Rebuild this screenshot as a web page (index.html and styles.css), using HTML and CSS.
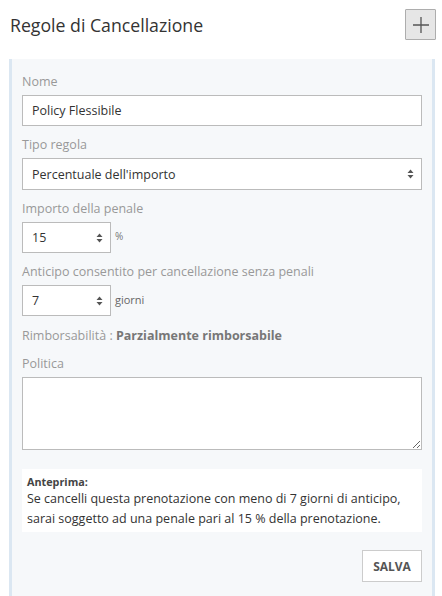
FILE: index.html
```html
<!DOCTYPE html>
<html lang="it">
<head>
<meta charset="utf-8">
<title>Regole di Cancellazione</title>
<link rel="stylesheet" href="styles.css">
</head>
<body>
<div class="page">
  <header class="header">
    <h1 class="title">Regole di Cancellazione</h1>
    <button class="add-btn" type="button" aria-label="Aggiungi">
      <svg width="18" height="18" viewBox="0 0 18 18"><path d="M9 1v16M1 9h16" stroke="#555" stroke-width="1.3" fill="none"/></svg>
    </button>
  </header>
  <section class="panel">
    <div class="group">
      <label class="label">Nome</label>
      <input class="input" type="text" value="Policy Flessibile">
    </div>
    <div class="group">
      <label class="label">Tipo regola</label>
      <div class="field select">
        <span class="field-text">Percentuale dell'importo</span>
        <svg class="arrows" width="7" height="10" viewBox="0 0 7 10"><path d="M3.5 0.5L6.5 4H0.5z M3.5 9.5L6.5 6H0.5z" fill="#555"/></svg>
      </div>
    </div>
    <div class="group">
      <label class="label">Importo della penale</label>
      <div class="inline">
        <div class="field number">
          <span class="field-text">15</span>
          <svg class="arrows" width="7" height="10" viewBox="0 0 7 10"><path d="M3.5 0.5L6.5 4H0.5z M3.5 9.5L6.5 6H0.5z" fill="#555"/></svg>
        </div>
        <span class="unit unit-pct">%</span>
      </div>
    </div>
    <div class="group">
      <label class="label">Anticipo consentito per cancellazione senza penali</label>
      <div class="inline">
        <div class="field number">
          <span class="field-text">7</span>
          <svg class="arrows" width="7" height="10" viewBox="0 0 7 10"><path d="M3.5 0.5L6.5 4H0.5z M3.5 9.5L6.5 6H0.5z" fill="#555"/></svg>
        </div>
        <span class="unit">giorni</span>
      </div>
    </div>
    <div class="group">
      <p class="label refund">Rimborsabilità : <strong>Parzialmente rimborsabile</strong></p>
    </div>
    <div class="group">
      <label class="label">Politica</label>
      <textarea class="textarea"></textarea>
    </div>
    <div class="preview">
      <div class="preview-title">Anteprima:</div>
      <p class="preview-text">Se cancelli questa prenotazione con meno di 7 giorni di anticipo, sarai soggetto ad una penale pari al 15 % della prenotazione.</p>
    </div>
    <div class="actions">
      <button class="save-btn" type="button">SALVA</button>
    </div>
  </section>
</div>
</body>
</html>
```
FILE: styles.css
```css
* { box-sizing: border-box; }
html, body { margin: 0; padding: 0; background: #fff; }
body {
  font-family: "Open Sans", "Noto Sans", sans-serif;
  color: #333;
  font-size: 12.5px;
}
.page { padding: 0 7px 0 9px; }
.header {
  display: flex;
  align-items: center;
  justify-content: space-between;
  height: 50px;
  padding-left: 1px;
}
.title {
  margin: 0;
  font-size: 17.7px;
  font-weight: 400;
  color: #333;
}
.add-btn {
  width: 31px;
  height: 31px;
  margin-top: -1px;
  margin-right: -1px;
  padding: 0;
  display: flex;
  align-items: center;
  justify-content: center;
  background: #e6e6e6;
  border: 1px solid #adadad;
  border-radius: 1px;
}
.panel {
  margin-top: 9px;
  background: #f6f8fa;
  border-left: 3px solid #dbe7f2;
  border-right: 3px solid #dbe7f2;
  padding: 14px 10px 30px 10px;
  min-height: 560px;
}
.group { margin-bottom: 10px; }
.label {
  display: block;
  margin: 0 0 4px 0;
  line-height: 18px;
  font-size: 12.5px;
  color: #999;
}
.refund { margin: 0; line-height: 19px; }
.refund strong { color: #777; font-weight: 700; }
.input, .field, .textarea {
  display: flex;
  align-items: center;
  width: 100%;
  height: 31px;
  border: 1px solid #bbb;
  background: #fff;
  font-family: inherit;
  font-size: 12.5px;
  color: #333;
  border-radius: 0;
  padding: 0 9px;
}
.select { height: 32px; justify-content: space-between; padding-right: 7px; }
.number { width: 89px; justify-content: space-between; padding-right: 7px; }
.inline { display: flex; align-items: center; gap: 4px; }
.unit { font-size: 11px; color: #666; margin-top: -2px; }
.unit-pct { margin-top: -4px; font-size: 10px; color: #777; }
.textarea {
  display: block;
  height: 73px;
  padding: 6px 9px;
  resize: vertical;
}
.preview {
  margin-top: 19px;
  background: #fff;
  padding: 5px 5px 3px 5px;
}
.preview-title {
  font-size: 10.8px;
  font-weight: 700;
  line-height: 15px;
  color: #444;
}
.preview-text {
  margin: 0;
  line-height: 20px;
  font-size: 12.5px;
  color: #333;
}
.actions {
  display: flex;
  justify-content: flex-end;
  margin-top: 18px;
}
.save-btn {
  width: 60px;
  height: 32px;
  padding: 0;
  background: #fff;
  border: 1px solid #ccc;
  font-family: inherit;
  font-size: 12px;
  font-weight: 700;
  color: #555;
  border-radius: 0;
}
```
